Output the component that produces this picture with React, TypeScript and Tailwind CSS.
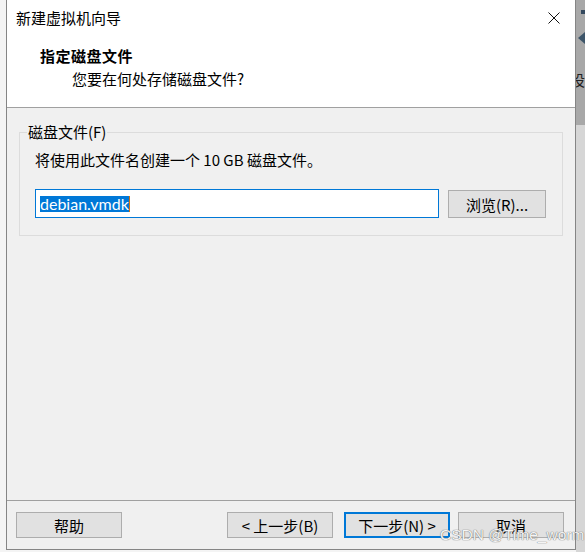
import React from "react";

const font = { fontFamily: '"Noto Sans CJK SC", "Noto Sans", sans-serif' };

function Btn({ label, primary }: { label: string; primary?: boolean }) {
  return (
    <div
      className={
        "w-[106px] h-[26px] bg-[#e1e1e1] flex items-center justify-center text-[15px] leading-none text-black " +
        (primary ? "border-2 border-[#0078d7]" : "border border-[#adadad]")
      }
    >
      {label}
    </div>
  );
}

export default function App() {
  return (
    <div className="w-[585px] h-[552px] bg-[#f4f4f4] flex overflow-hidden relative" style={font}>
      <div className="w-[6px] shrink-0" />

      {/* dialog window */}
      <div className="w-[570px] h-[550px] shrink-0 flex flex-col border-x border-b border-[#858585] bg-[#f0f0f0] relative">
        <div className="h-[108px] bg-white border-b border-[#a0a0a0] shrink-0 flex flex-col">
          <div className="pt-[8px] pl-[9px] h-[28px] text-[15px] leading-[20px] text-black">新建虚拟机向导</div>
          <div className="mt-[18px] pl-[33px] text-[15px] leading-[20px] font-bold text-black tracking-[0.5px]">指定磁盘文件</div>
          <div className="mt-[3px] pl-[65px] text-[15px] leading-[20px] text-black">您要在何处存储磁盘文件?</div>
        </div>

        <svg className="absolute left-[541px] top-[12px]" width="12" height="12" viewBox="0 0 12 12">
          <path d="M0.5 0.5 L11.5 11.5 M11.5 0.5 L0.5 11.5" stroke="#111" strokeWidth="1" fill="none" />
        </svg>

        <div className="flex-1 pt-[24px]">
          <div className="relative ml-[12px] w-[544px] border border-[#dcdcdc] pl-[15px] pt-[17px] pb-[17px]">
            <div className="absolute left-[7px] top-[-11px] px-[1px] bg-[#f0f0f0] text-[15px] leading-[20px] text-black">
              磁盘文件(F)
            </div>
            <div className="text-[15px] leading-[20px] text-black">将使用此文件名创建一个 10 GB 磁盘文件。</div>
            <div className="mt-[19px] flex items-start">
              <div className="w-[404px] h-[29px] bg-white border border-[#0078d7] flex items-center pl-[4px]">
                <span
                  className="bg-[#0078d7] text-white text-[16px] leading-[16px] h-[16px]"
                  style={{ fontFamily: "Lato, sans-serif" }}
                >
                  debian.vmdk
                </span>
                <span className="w-[1px] h-[16px] bg-[#d07010]" />
              </div>
              <div className="ml-[9px] mt-[1px] w-[98px] h-[28px] bg-[#e1e1e1] border border-[#adadad] flex items-center justify-center text-[15px] leading-none text-black">
                浏览(R)...
              </div>
            </div>
          </div>
        </div>

        <div className="h-[49px] shrink-0 border-t border-[#a0a0a0] flex items-start pt-[11px]">
          <div className="ml-[9px]">
            <Btn label="帮助" />
          </div>
          <div className="flex-1" />
          <Btn label="< 上一步(B)" />
          <div className="w-[11px]" />
          <Btn label="下一步(N) >" primary />
          <div className="w-[8px]" />
          <Btn label="取消" />
          <div className="w-[11px]" />
        </div>
      </div>

      {/* background window strip */}
      <div className="flex-1 flex flex-col overflow-hidden">
        <div className="h-[125px] bg-[#a8a8a8] relative overflow-hidden">
          <div className="absolute left-[5px] top-[10px] w-[6px] h-[4px] bg-[#34495e]" />
          <div className="absolute left-[2px] top-[32px] w-0 h-0 border-y-[6px] border-y-transparent border-r-[7px] border-r-[#3d5569]" />
          <div className="absolute left-[-6px] top-[70px] text-[15px] leading-[20px] text-[#222]">设</div>
        </div>
        <div className="flex-1 bg-[#d6d6d6]" />
      </div>

      <div
        className="absolute left-[440px] top-[525px] whitespace-nowrap text-[15.5px] leading-[20px] text-[#f4f4f4]"
        style={{ fontFamily: '"Liberation Sans", sans-serif', textShadow: "0 0 1px #666, 0 0 1px #888" }}
      >
        CSDN @Time_worm
      </div>
    </div>
  );
}
